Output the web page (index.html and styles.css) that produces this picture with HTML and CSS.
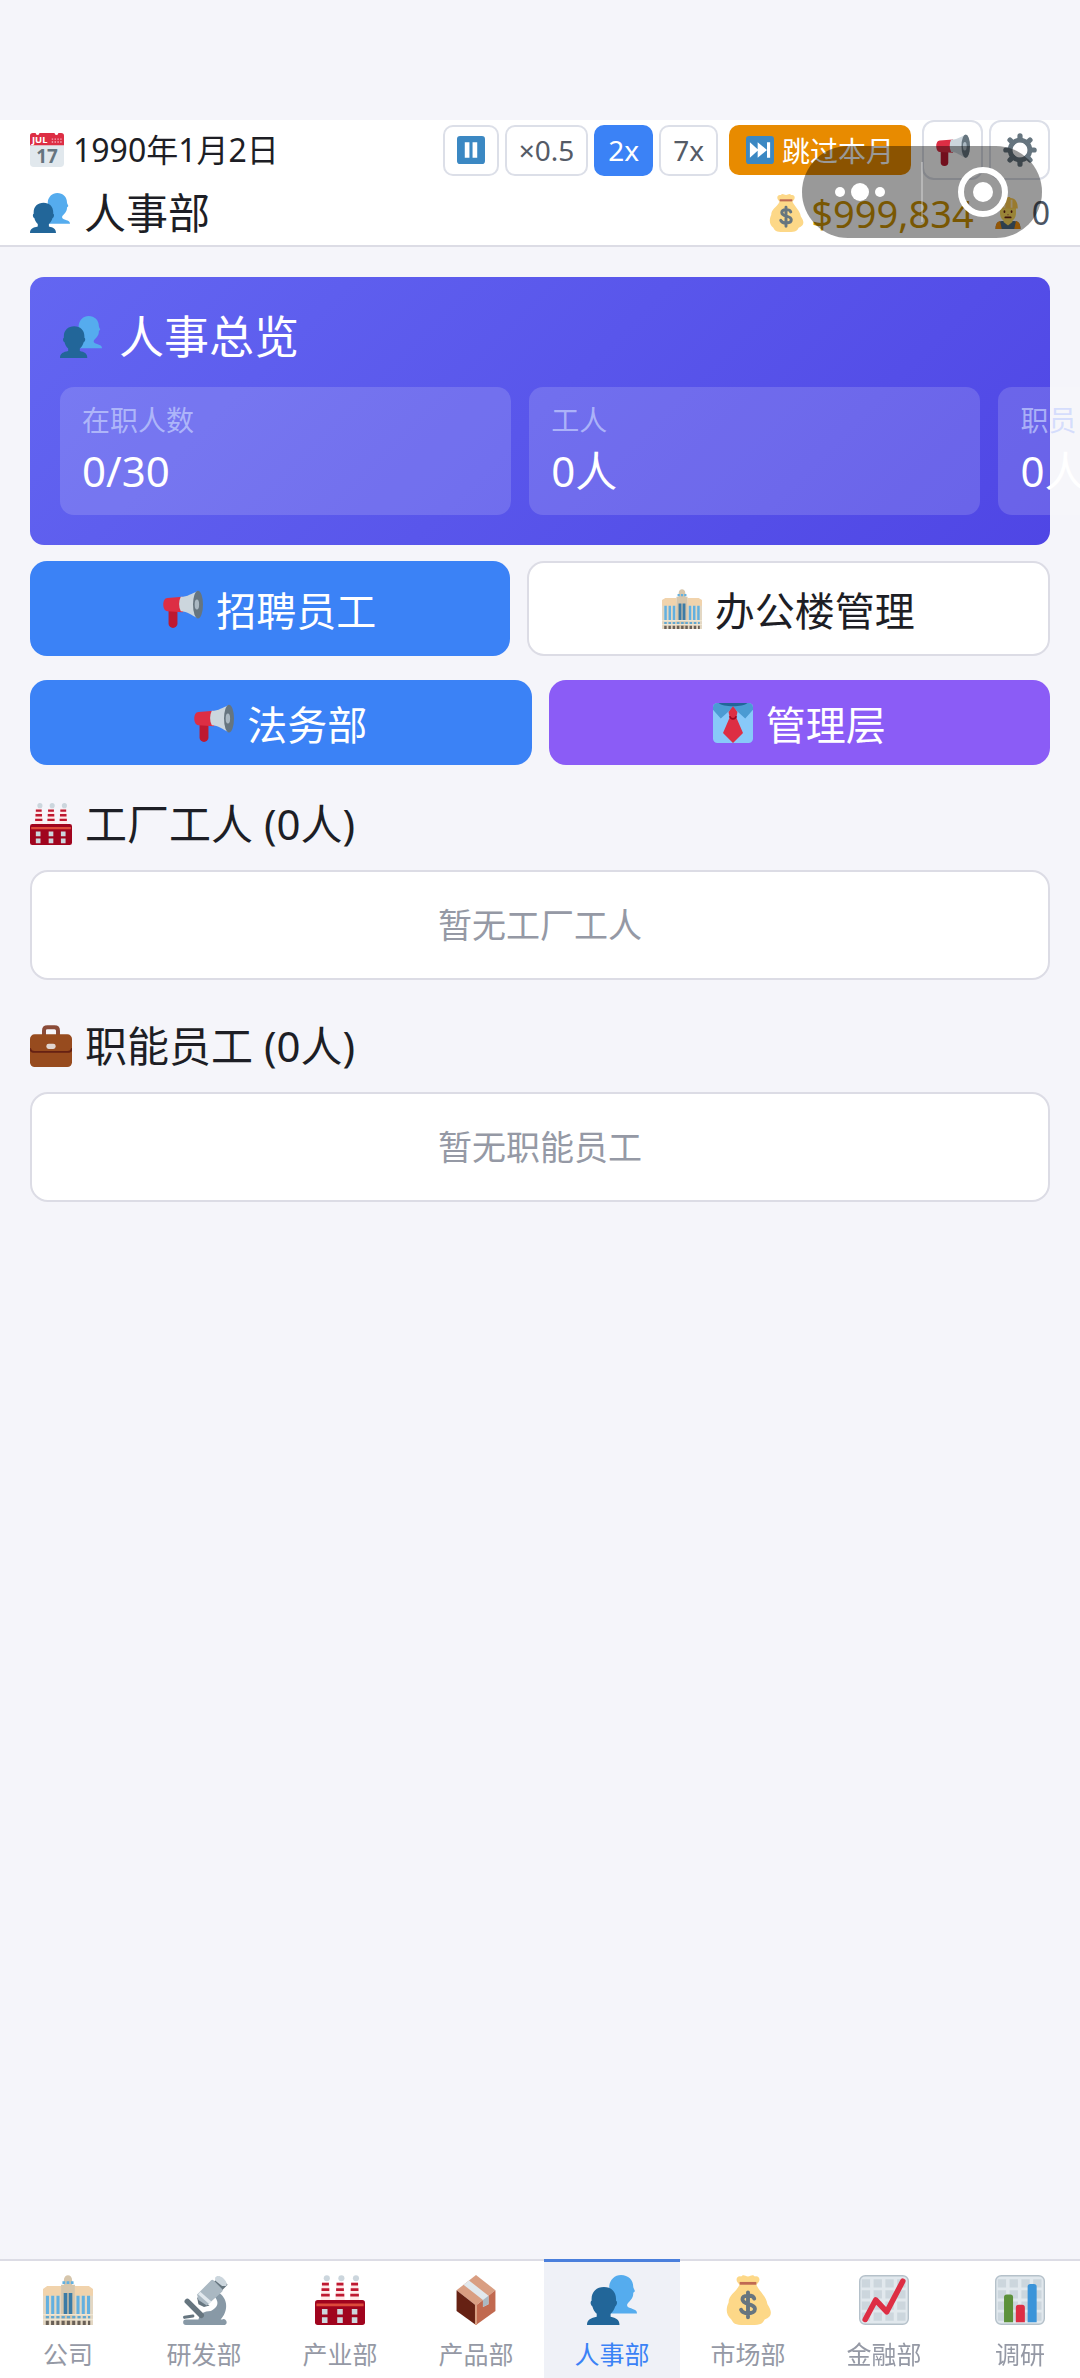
FILE: index.html
```html
<!DOCTYPE html>
<html lang="zh-CN">
<head>
<meta charset="utf-8">
<meta name="viewport" content="width=device-width, initial-scale=1">
<title>人事部</title>
<link rel="stylesheet" href="styles.css">
</head>
<body>
<svg class="sprite" aria-hidden="true">
  <symbol id="people" viewBox="0 0 36 36">
    <path fill="#55acee" d="M24.500 0c5.200 0 8.800 3.600 8.800 8.500 0 1 .9 2 1.200 3.100-.3.800-1.200.9-1.200 1.600 0 3.500-2 5-4 7.300-.8 1-.6 2.400 1.200 3.100 3.600 1.300 5.500 1.600 5.500 4.100H16V8C16.500 3.500 20 0 24.500 0z"/>
    <path fill="#269" d="M12.200 8.700c5.200 0 8.700 3.400 8.700 8.500v1.400c1 .2 1.100 2.900-.6 4-.6 2-1.700 4-3.300 5.300v2.200c3.800.9 6.400 1.800 6.400 5.900H0c0-4.100 3-5 7-5.900v-2.200c-1.600-1.300-2.600-3.300-3.100-5.300-1.700-1.100-1.500-3.800-.6-4v-1.400c0-5.100 3.700-8.500 8.900-8.500z"/>
  </symbol>
  <symbol id="pause" viewBox="0 0 36 36">
    <rect width="36" height="36" rx="4" fill="#3b88c3"/>
    <path fill="#fff" d="M10 8h6v20h-6zM20 8h6v20h-6z"/>
  </symbol>
  <symbol id="skip" viewBox="0 0 36 36">
    <rect width="36" height="36" rx="4" fill="#3b88c3"/>
    <path fill="#fff" d="M5 8l11 10L5 28zM15 8l12 10-12 10zM27 8h4v20h-4z"/>
  </symbol>
  <symbol id="megaphone" viewBox="0 0 36 36">
    <path fill="#be1931" d="M5 18h8v13a4 4 0 0 1-8 0z"/>
    <path fill="#dd2e44" d="M4 8l14-1v14L4 20c-5 0-5-12 0-12z"/>
    <path fill="#ccd6dd" d="M16 7c6 0 10-3 15-5v24c-5-2-9-6-15-6-2-4-2-9 0-13z"/>
    <ellipse cx="31.500" cy="14" rx="4.500" ry="12.500" fill="#66757f"/>
    <ellipse cx="30.500" cy="14" rx="2" ry="4.500" fill="#aab8c2"/>
  </symbol>
  <symbol id="gear" viewBox="0 0 36 36">
    <circle cx="18" cy="18" r="10.500" fill="none" stroke="#66757f" stroke-width="5"/>
    <path stroke="#66757f" stroke-width="5.500" stroke-linecap="round" d="M18 3v4M18 29v4M3 18h4M29 18h4M7.400 7.400l3 3M25.600 25.600l3 3M7.400 28.600l3-3M25.600 10.400l3-3"/>
  </symbol>
  <symbol id="bag" viewBox="0 0 36 36">
    <path fill="#fdd888" d="M12 7C8 4 10 0 13 1c2-2 3 0 5 0s3-2 5 0c3-1 5 3 1 6 3 6 7 8 8 14 4 6 3 9-2 11-2 4-4 4-12 4s-10 0-12-4c-4-3-4-8-2-12 0-6 5-7 8-13z"/>
    <path fill="#bf6952" d="M12 5h12v2H12z"/>
    <path fill="none" stroke="#67757f" stroke-width="2.800" stroke-linecap="round" d="M18 12.500v18M22.500 17c-1-3-8.500-3-8.500.5 0 4.500 9 2.500 9 7 0 4-8.500 4-10 .5"/>
  </symbol>
  <symbol id="worker" viewBox="0 0 36 36">
    <path fill="#4b6a82" d="M4 36c0-8 4-9 9-9h10c5 0 9 1 9 9z"/>
    <path fill="#f4900c" d="M4 36c0-5 1-8 5-9l2 9zM32 36c0-5-1-8-5-9l-2 9z"/>
    <path fill="#ffdc5d" d="M13 24h10v4l-5 4-5-4z"/>
    <path fill="#ffdc5d" d="M9 12h18v6c0 6-4 10-9 10s-9-4-9-10z"/>
    <path fill="#ffcc4d" d="M7 13C7 5 11 1 15 1l1-1h4l1 1c5 0 8 4 8 12z"/>
    <path stroke="#ffe8b6" stroke-width="2" d="M14 3v9M22 3v9"/>
    <path stroke="#662113" stroke-width="2" stroke-linecap="round" d="M14 16v1M22 16v1M15 23h6"/>
    <path stroke="#c1694f" d="M17 20h2"/>
  </symbol>
  <symbol id="office" viewBox="0 0 36 36">
    <path fill="#f1d3ac" d="M0 10l3-2h10l1 28H0zM36 10l-3-2H23l-1 28h14z"/>
    <path fill="#e3d7c3" d="M0 15h13v21H0zM23 15h13v21H23z"/>
    <path fill="#d6c6ac" d="M13 7h2V4c0-5 6-5 6 0v3h2v29H13z"/>
    <path stroke="#62b0e0" stroke-width="2.200" d="M3.200 15v13M7 15v13M10.800 15v13M25.200 15v13M29 15v13M32.800 15v13"/>
    <path stroke="#62b0e0" stroke-width="2" stroke-dasharray="2 1" d="M14 5.500h8"/>
    <path stroke="#3b7ba6" stroke-width="2.600" d="M16.200 13v15M19.800 13v15"/>
    <path stroke="#62a8d0" stroke-width="1.800" stroke-dasharray="2.300 1.500" d="M2 30.500h32"/>
    <path stroke="#f0e6d2" d="M0 28.500h36M0 32h36"/>
    <path stroke="#696057" stroke-width="3" stroke-dasharray="2.200 1.600" d="M2 34.500h32"/>
  </symbol>
  <symbol id="tie" viewBox="0 0 36 36">
    <rect width="36" height="36" rx="4" fill="#88c9f9"/>
    <path fill="#4b9bd3" d="M4 0h28a4 4 0 0 1 4 4v2l-7 8-11-10L7 14 0 6V4a4 4 0 0 1 4-4z"/>
    <path fill="#269" d="M5 0h26c-4 4-22 4-26 0z"/>
    <path fill="#dd2e44" d="M18 3l4 5-1 5 6 14-9 9-9-9 6-14-1-5z"/>
    <path fill="none" stroke="#a0041e" stroke-width="1.500" d="M15 12c1 3 5 3 6 0"/>
  </symbol>
  <symbol id="factory" viewBox="0 0 36 36">
    <path fill="#ffe8e8" d="M5 5h5l1 14H4zM15.500 5h5l1 14h-7zM26 5h5l1 14h-7z"/>
    <path stroke="#be1931" stroke-width="2" d="M5 6.500h5M4.700 10.500h5.600M4.400 14.500h6.200M15.500 6.500h5M15.200 10.500h5.600M14.900 14.500h6.200M26 6.500h5M25.700 10.500h5.600M25.400 14.500h6.200"/>
    <g fill="#ccd6dd"><circle cx="8.500" cy="2.300" r="2.200"/><circle cx="19" cy="2.300" r="2.200"/><circle cx="29.500" cy="2.300" r="2.200"/></g>
    <rect y="18" width="36" height="18" rx="2" fill="#a0041e"/>
    <path stroke="#dd4a3a" stroke-width="2" d="M1 21.500h34"/>
    <path fill="#ccd6dd" d="M5 24.500h4v4H5zM16 24.500h4v4h-4zM26.500 24.500h4v4h-4zM5 30.500h4v4H5zM16 30.500h4v4h-4zM26.500 30.500h4v4h-4z"/>
  </symbol>
  <symbol id="briefcase" viewBox="0 0 36 36">
    <path fill="none" stroke="#8a4b38" stroke-width="3.400" d="M12 9V5c0-2 1-3 3-3h6c2 0 3 1 3 3v4"/>
    <rect y="8" width="36" height="28" rx="4" fill="#974b1e"/>
    <path fill="none" stroke="#662113" stroke-width="1.600" d="M0 20c1 3 2 3 4 3h28c2 0 3 0 4-3"/>
    <rect x="14" y="16" width="8" height="4.500" rx="2" fill="#e1d5cf"/>
  </symbol>
  <symbol id="microscope" viewBox="0 0 36 36">
    <path fill="#8899a6" d="M5 32h9c1-4 4-6 9-6 5-3 6-6 3-10l3-3c7 5 6 14 1 19h1a2 2 0 0 1 2 4H5a2 2 0 0 1 0-4z"/>
    <path stroke="#66757f" stroke-width="4" stroke-linecap="round" d="M6 19l10 10"/>
    <path stroke="#66757f" stroke-width="2.200" stroke-linecap="round" d="M4 30.500l6-1"/>
    <path fill="#66757f" d="M13 16l9 6-4 1-4-2zM24 6l5-5 6 6-5 5z"/>
    <path fill="#aab8c2" d="M13 14L23 4q1-1 2 0l6 6q1 1 0 2L20 22l-6-4z"/>
    <path stroke="#e1e8ed" stroke-width="2.500" d="M14.500 13l8 7"/>
    <path fill="#ccd6dd" d="M26 2c2-4 10 2 8 6l-3 0-5-4z"/>
  </symbol>
  <symbol id="package" viewBox="0 0 36 36">
    <path fill="#d99e82" d="M18 0l14 11-14 11L4 11z"/>
    <path fill="#662113" d="M4 11l14 11v14L4 26z"/>
    <path fill="#c1694f" d="M32 11L18 22v14l14-10z"/>
    <path stroke="#d99e82" stroke-width="1.500" d="M18 21v15"/>
    <path fill="#e1e8ed" d="M13 4l14 11v6l-4 2v-5L9 7z"/>
    <path fill="#aab8c2" d="M23 18l4-3v6l-4 2z"/>
  </symbol>
  <symbol id="grid" viewBox="0 0 36 36">
    <rect x=".5" y=".5" width="35" height="35" rx="4" fill="#e1e8ed" stroke="#b5c1ca"/>
    <path fill="#ccd6dd" d="M2 3h6v6H2zM10.500 3h6v6h-6zM19 3h6v6h-6zM27.500 3h6v6h-6zM2 11h6v6H2zM10.500 11h6v6h-6zM19 11h6v6h-6zM27.500 11h6v6h-6zM2 19h6v6H2zM10.500 19h6v6h-6zM19 19h6v6h-6zM27.500 19h6v6h-6zM2 27h6v6H2zM10.500 27h6v6h-6zM19 27h6v6h-6zM27.500 27h6v6h-6z"/>
  </symbol>
  <symbol id="trend" viewBox="0 0 36 36">
    <use href="#grid"/>
    <path fill="none" stroke="#dd2e44" stroke-width="4" stroke-linecap="round" stroke-linejoin="round" d="M4.500 32l7.500-14 8 8.500L31.500 4.500"/>
  </symbol>
  <symbol id="bars" viewBox="0 0 36 36">
    <use href="#grid"/>
    <path fill="#5c913b" d="M6.500 34V16q0-2 2-2H11q2 0 2 2v18z"/>
    <path fill="#dd2e44" d="M15 34V23.500q0-2 2-2h2.500q2 0 2 2V34z"/>
    <path fill="#3b94d9" d="M23.500 34V8.500q0-2 2-2H28q2 0 2 2V34z"/>
  </symbol>
</svg>

<div class="app">
  <header class="header">
    <div class="row">
      <div class="date">
        <svg class="icon i34" viewBox="0 0 36 36">
          <path fill="#e1e8ed" d="M0 12h36v20a4 4 0 0 1-4 4H4a4 4 0 0 1-4-4z"/>
          <path fill="#dd2e44" d="M0 3a3 3 0 0 1 3-3h3a2 2 0 0 0 4 0h16a2 2 0 0 0 4 0h3a3 3 0 0 1 3 3v10H0z"/>
          <path stroke="#f4abba" stroke-width="1.500" stroke-dasharray="1.500 1.500" d="M23 6.500h11M23 9.500h11"/>
          <text class="cal-month" x="2" y="11">JUL</text>
          <text class="cal-day" x="18" y="32">17</text>
        </svg>
        <span>1990年1月2日</span>
      </div>
      <div class="controls">
        <div class="speeds">
          <button class="speed" type="button" aria-label="暂停"><svg class="icon i28"><use href="#pause"/></svg></button>
          <button class="speed" type="button">×0.5</button>
          <button class="speed speed-on" type="button">2x</button>
          <button class="speed" type="button">7x</button>
        </div>
        <button class="skip" type="button"><svg class="icon i28"><use href="#skip"/></svg>跳过本月</button>
        <div class="tools">
          <button class="tool" type="button" aria-label="公告"><svg class="icon i34"><use href="#megaphone"/></svg></button>
          <button class="tool" type="button" aria-label="设置"><svg class="icon i34"><use href="#gear"/></svg></button>
        </div>
      </div>
    </div>
    <div class="row row-title">
      <h1 class="title"><svg class="icon i40"><use href="#people"/></svg>人事部</h1>
      <div class="assets">
        <span class="money"><svg class="icon i38"><use href="#bag"/></svg>$999,834</span>
        <span class="workers"><svg class="icon i32"><use href="#worker"/></svg>0</span>
      </div>
    </div>
    <div class="capsule">
      <button class="capsule-btn" type="button" aria-label="更多"><svg width="80" height="52" viewBox="0 0 80 52" fill="#fff"><circle cx="18" cy="26" r="5"/><circle cx="38" cy="26" r="9"/><circle cx="58" cy="26" r="5"/></svg></button>
      <span class="capsule-line"></span>
      <button class="capsule-btn" type="button" aria-label="关闭"><svg width="52" height="52" viewBox="0 0 52 52"><circle cx="26" cy="26" r="22" fill="none" stroke="#fff" stroke-width="6"/><circle cx="26" cy="26" r="10" fill="#fff"/></svg></button>
    </div>
  </header>

  <main class="main">
    <section class="overview">
      <h2 class="overview-title"><svg class="icon i42"><use href="#people"/></svg>人事总览</h2>
      <dl class="stats">
        <div class="stat"><dt>在职人数</dt><dd>0/30</dd></div>
        <div class="stat"><dt>工人</dt><dd>0人</dd></div>
        <div class="stat"><dt>职员</dt><dd>0人</dd></div>
      </dl>
    </section>

    <div class="actions">
      <button class="btn btn-blue" type="button"><svg class="icon i40"><use href="#megaphone"/></svg>招聘员工</button>
      <button class="btn btn-white" type="button"><svg class="icon i40"><use href="#office"/></svg>办公楼管理</button>
    </div>
    <div class="actions actions-even">
      <button class="btn btn-blue" type="button"><svg class="icon i40"><use href="#megaphone"/></svg>法务部</button>
      <button class="btn btn-purple" type="button"><svg class="icon i40"><use href="#tie"/></svg>管理层</button>
    </div>

    <section class="group">
      <h2 class="group-title"><svg class="icon i42"><use href="#factory"/></svg>工厂工人 (0人)</h2>
      <p class="empty">暂无工厂工人</p>
    </section>
    <section class="group">
      <h2 class="group-title"><svg class="icon i42"><use href="#briefcase"/></svg>职能员工 (0人)</h2>
      <p class="empty">暂无职能员工</p>
    </section>
  </main>

  <nav class="nav">
    <a class="tab" href="#company"><svg class="icon i50"><use href="#office"/></svg>公司</a>
    <a class="tab" href="#research"><svg class="icon i50"><use href="#microscope"/></svg>研发部</a>
    <a class="tab" href="#industry"><svg class="icon i50"><use href="#factory"/></svg>产业部</a>
    <a class="tab" href="#product"><svg class="icon i50"><use href="#package"/></svg>产品部</a>
    <a class="tab tab-on" href="#hr"><svg class="icon i50"><use href="#people"/></svg>人事部</a>
    <a class="tab" href="#market"><svg class="icon i50"><use href="#bag"/></svg>市场部</a>
    <a class="tab" href="#finance"><svg class="icon i50"><use href="#trend"/></svg>金融部</a>
    <a class="tab" href="#survey"><svg class="icon i50"><use href="#bars"/></svg>调研</a>
  </nav>
</div>
</body>
</html>
```

FILE: styles.css
```css
* { box-sizing: border-box; }

body {
  margin: 0;
  background: #f5f5fa;
  color: #1d1e25;
  font-family: "Noto Sans", "Noto Sans CJK SC", sans-serif;
}

h1, h2, p, dl, dd { margin: 0; font-weight: 400; }

button {
  font-family: inherit;
  font-weight: 400;
  margin: 0;
  padding: 0;
  border: 0;
  display: flex;
  align-items: center;
  justify-content: center;
}

.sprite { display: none; }

.icon { display: block; flex: none; }
.i28 { width: 28px; height: 28px; }
.i32 { width: 32px; height: 32px; }
.i34 { width: 34px; height: 34px; }
.i38 { width: 38px; height: 38px; }
.i40 { width: 40px; height: 40px; }
.i42 { width: 42px; height: 42px; }
.i50 { width: 50px; height: 50px; }

.cal-month { font-size: 10px; font-weight: 700; fill: #fff; }
.cal-day { font-size: 20px; font-weight: 700; fill: #66757f; text-anchor: middle; }

.app {
  min-height: 100vh;
  padding-top: 120px;
  display: flex;
  flex-direction: column;
  overflow-x: hidden;
}

/* Header */
.header {
  position: relative;
  padding: 0 30px;
  background: #fff;
  border-bottom: 2px solid #dcdce5;
}

.row {
  display: flex;
  align-items: center;
  justify-content: space-between;
  height: 60px;
}

.row-title { height: 65px; }

.date {
  display: flex;
  align-items: center;
  gap: 9px;
  font-size: 32px;
  line-height: 40px;
}

.controls { display: flex; align-items: center; gap: 11px; }
.speeds, .tools { display: flex; gap: 6px; }

.speed {
  height: 51px;
  padding: 0 12px;
  border: 2px solid #dcdfe8;
  border-radius: 10px;
  background: #fff;
  color: #555b66;
  font-size: 28px;
}

.speed-on { background: #3b82f6; border-color: #3b82f6; color: #fff; }

.skip {
  height: 50px;
  padding: 0 17px;
  gap: 8px;
  border-radius: 10px;
  background: #e88b00;
  color: #fff;
  font-size: 28px;
}

.tool {
  width: 61px;
  height: 60px;
  border: 2px solid #dcdfe8;
  border-radius: 12px;
  background: #fff;
}

.title {
  display: flex;
  align-items: center;
  gap: 14px;
  font-size: 42px;
  line-height: 56px;
}

.assets { display: flex; align-items: center; gap: 18px; }

.money {
  display: flex;
  align-items: center;
  gap: 6px;
  color: #ca9204;
  font-size: 38px;
  line-height: 56px;
}

.workers {
  display: flex;
  align-items: center;
  gap: 8px;
  color: #4b5563;
  font-size: 32px;
  line-height: 56px;
}

/* Floating host-app capsule over the header */
.capsule {
  position: absolute;
  top: 26px;
  right: 38px;
  width: 240px;
  height: 92px;
  border-radius: 46px;
  background: rgba(0, 0, 0, 0.4);
  display: flex;
  align-items: center;
}

.capsule-btn { flex: 1; height: 92px; background: none; }
.capsule-line { width: 2px; height: 60px; background: rgba(255, 255, 255, 0.3); }

/* Page content */
.main { flex: 1; padding: 30px; }

.overview {
  padding: 30px;
  border-radius: 14px;
  background: linear-gradient(135deg, #6366f1, #4f46e5);
  color: #fff;
}

.overview-title {
  display: flex;
  align-items: center;
  gap: 17px;
  margin-bottom: 20px;
  font-size: 45px;
  line-height: 60px;
}

.stats { display: flex; gap: 18px; }

.stat {
  flex: 0 0 47%;
  padding: 16px 22px;
  border-radius: 14px;
  background: rgba(255, 255, 255, 0.15);
}

.stat dt {
  margin-bottom: 6px;
  color: rgba(199, 210, 254, 0.7);
  font-size: 28px;
  line-height: 34px;
}

.stat dd { font-size: 42px; line-height: 56px; }

.actions { display: flex; gap: 17px; margin-top: 16px; }
.actions-even { margin-top: 24px; }

.btn {
  flex: 1 1 auto;
  height: 95px;
  gap: 13px;
  border-radius: 17px;
  font-size: 40px;
  color: #fff;
}

.actions-even .btn { flex: 1 1 0; height: 85px; }

.btn-blue { background: #3b82f6; }
.btn-purple { background: #8b5cf6; }
.btn-white { background: #fff; color: #1d1e25; border: 2px solid #dcdce5; }

.group { margin-top: 29px; }
.group + .group { margin-top: 36px; }

.group-title {
  display: flex;
  align-items: center;
  gap: 13px;
  margin-bottom: 16px;
  font-size: 42px;
  line-height: 60px;
}

.empty {
  padding: 28px;
  border: 2px solid #dcdce5;
  border-radius: 18px;
  background: #fff;
  color: #9599a5;
  font-size: 34px;
  line-height: 50px;
  text-align: center;
}

/* Bottom tabs */
.nav {
  position: sticky;
  bottom: 0;
  display: flex;
  background: #fff;
  box-shadow: inset 0 2px #dcdce5;
}

.tab {
  flex: 0 0 136px;
  height: 119px;
  padding-top: 13px;
  border-top: 3px solid transparent;
  display: flex;
  flex-direction: column;
  align-items: center;
  gap: 12px;
  color: #9599a5;
  font-size: 25px;
  line-height: 34px;
  text-decoration: none;
}

.tab-on { background: #eff1f7; border-top-color: #4a7fdc; color: #3b82f6; }
```
